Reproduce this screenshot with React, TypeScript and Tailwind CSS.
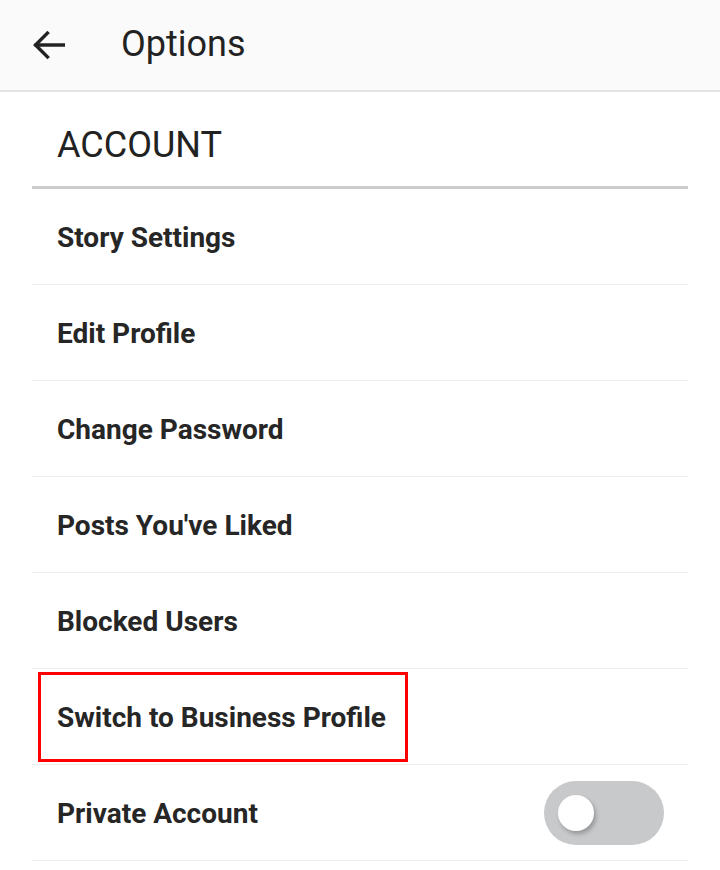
import React from 'react'

const rows = ['Story Settings', 'Edit Profile', 'Change Password', "Posts You've Liked", 'Blocked Users']

const App: React.FC = () => {
  return (
    <div className="w-[720px] h-[870px] bg-white overflow-hidden font-['Roboto',sans-serif] text-[#262626]">
      <header className="h-[92px] bg-[#fafafa] border-b-2 border-[#e2e2e2] flex items-center">
        <svg className="ml-[30px] mt-[-1px]" width="38" height="38" viewBox="0 0 24 24" fill="none" stroke="#222" strokeWidth="2.2" strokeLinecap="square">
          <path d="M21 12H4" />
          <path d="M11 4.5 3.5 12l7.5 7.5" />
        </svg>
        <h1 className="ml-[53px] text-[36px] leading-none text-[#222] mt-[-2px]">Options</h1>
      </header>

      <div className="mx-[32px]">
        <div className="h-[97px] flex items-center pl-[25px] border-b-[3px] border-[#cdcdcd]">
          <h2 className="text-[36px] leading-none text-[#222] mt-[12px]">ACCOUNT</h2>
        </div>

        {rows.map((label) => (
          <div key={label} className="h-[96px] flex items-center pl-[25px] border-b border-[#efefef]">
            <span className="text-[28px] font-bold leading-none mt-[2px]">{label}</span>
          </div>
        ))}

        <div className="h-[96px] flex items-center border-b border-[#efefef]">
          <div className="ml-[6px] h-[90px] w-[370px] border-[3px] border-[#ff0000] flex items-center pl-[16px]">
            <span className="text-[28px] font-bold leading-none mt-[2px]">Switch to Business Profile</span>
          </div>
        </div>

        <div className="h-[96px] flex items-center justify-between pl-[25px] border-b border-[#efefef]">
          <span className="text-[28px] font-bold leading-none mt-[2px]">Private Account</span>
          <div className="mr-[24px] w-[120px] h-[64px] rounded-full bg-[#c8c9cb] flex items-center pl-[14px]">
            <div className="w-[36px] h-[36px] rounded-full bg-white shadow-[2px_3px_4px_rgba(0,0,0,0.25)]" />
          </div>
        </div>
      </div>
    </div>
  )
}

export default App
